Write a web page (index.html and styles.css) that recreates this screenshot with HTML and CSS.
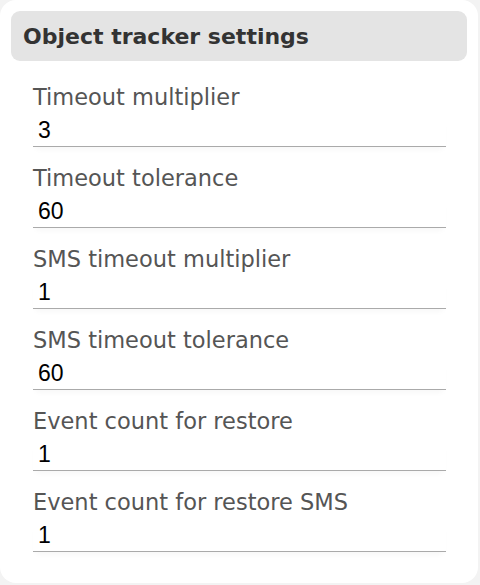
FILE: index.html
```html
<!DOCTYPE html>
<html>
<head>
  <title>Object tracker settings</title>
  <meta name="viewport" content="width=device-width, initial-scale=1">
  <link rel="stylesheet" href="styles.css">
</head>
<body>
  <section class="panel">
    <h1 class="panel-title">Object tracker settings</h1>
    <div class="fields">
      <div class="field">
        <label for="timeout_mult">Timeout multiplier</label>
        <input id="timeout_mult" type="text" value="3">
      </div>
      <div class="field">
        <label for="timeout_tol">Timeout tolerance</label>
        <input id="timeout_tol" type="text" value="60">
      </div>
      <div class="field">
        <label for="sms_mult">SMS timeout multiplier</label>
        <input id="sms_mult" type="text" value="1">
      </div>
      <div class="field">
        <label for="sms_tol">SMS timeout tolerance</label>
        <input id="sms_tol" type="text" value="60">
      </div>
      <div class="field">
        <label for="restore_count">Event count for restore</label>
        <input id="restore_count" type="text" value="1">
      </div>
      <div class="field">
        <label for="restore_sms">Event count for restore SMS</label>
        <input id="restore_sms" type="text" value="1">
      </div>
    </div>
  </section>
</body>
</html>
```

FILE: styles.css
```css
body{
	margin: 0px;
	background-color: #f3f3f3;
	font-family: "DejaVu Sans", Verdana, sans-serif;
}
.panel{
	box-sizing: border-box;
	width: 478px;
	height: 583px;
	padding: 11px;
	background-color: #ffffff;
	border-radius: 16px;
}
.panel-title{
	box-sizing: border-box;
	height: 50px;
	margin: 0px;
	padding-left: 12px;
	display: flex;
	align-items: center;
	font-size: 22px;
	font-weight: bold;
	color: #333333;
	background-color: #e4e4e4;
	border-radius: 9px;
}
.fields{
	margin: 23px 0px 0px 22px;
	width: 413px;
}
.field{
	display: flex;
	flex-direction: column;
	gap: 7px;
	margin-bottom: 18px;
}
.field label{
	font-size: 22.5px;
	line-height: 26px;
	color: #555555;
}
.field input{
	box-sizing: border-box;
	height: 30px;
	padding: 0px 0px 3px 5px;
	font-family: "Liberation Sans", Arial, sans-serif;
	font-size: 23px;
	color: #000000;
	background: transparent;
	border: none;
	border-bottom: 1px solid #aaaaaa;
	box-shadow: 0px 5px 6px -3px rgba(0,0,0,.04);
	outline: none;
}
```
